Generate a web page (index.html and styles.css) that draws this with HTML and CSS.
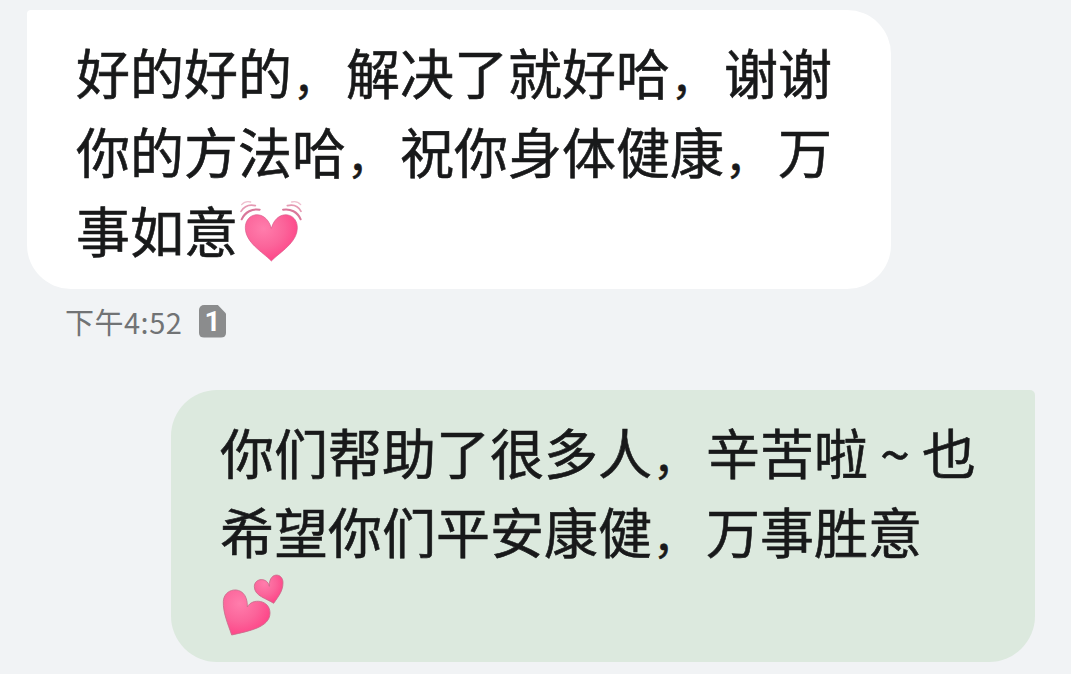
FILE: index.html
```html
<!DOCTYPE html>
<html lang="zh-CN">
<head>
<meta charset="utf-8">
<title>短信</title>
<link rel="stylesheet" href="styles.css">
</head>
<body>
<main class="chat">
  <section class="bubble received">
    <p>好的好的<span class="comma">，</span>解决了就好哈<span class="comma">，</span>谢谢</p>
    <p>你的方法哈<span class="comma">，</span>祝你身体健康<span class="comma">，</span>万</p>
    <p class="with-emoji">事如意<svg class="beating" viewBox="54 54 192 192">
      <defs><radialGradient id="pink" cx=".35" cy=".3" r=".8"><stop offset="0" stop-color="#ff7dac"/><stop offset=".5" stop-color="#fb649a"/><stop offset="1" stop-color="#ff3d83"/></radialGradient></defs>
      <path d="M154 243C128 216 76 188 76 143C76 96 138 86 154 145C170 86 232 96 232 143C232 188 180 216 154 243Z" fill="url(#pink)" stroke="#d85b8a" stroke-width="2"/>
      <g fill="none" stroke-linecap="round"><g stroke="#d9779a" stroke-width="6"><path d="M65 118C75 96 97 85 119 89"/><path d="M242 118C233 96 211 85 189 89"/></g><g stroke="#e59ab3" stroke-width="5"><path d="M63 94C74 77 90 73 106 77"/><path d="M243 94C234 77 218 73 202 77"/></g><g stroke="#efc0cf" stroke-width="4"><path d="M65 74C73 65 82 63 92 66"/><path d="M242 74C234 65 225 63 215 66"/></g></g>
    </svg></p>
  </section>
  <div class="meta"><time>下午4:52</time><span class="sim">1</span></div>
  <section class="bubble sent">
    <p>你们帮助了很多人<span class="comma">，</span>辛苦啦<span class="tilde">~</span>也</p>
    <p>希望你们平安康健<span class="comma">，</span>万事胜意</p>
    <p class="with-emoji"><svg class="hearts" viewBox="60 39 192 192" fill="url(#pink)" stroke="#c96c8b" stroke-width="2.5">
      <path d="M95 225C83 190 69 158 70 125C71 79 145 72 142 141C156 113 210 119 210 159C210 202 147 213 95 225Z"/>
      <path d="M221 130C201 116 163 108 163 80C163 53 203 51 208 79C206 35 249 37 249 68C249 94 235 109 221 130Z"/>
    </svg></p>
  </section>
</main>
</body>
</html>
```
FILE: styles.css
```css
body{margin:0;background:#f1f3f5;font-family:"Noto Sans CJK SC",sans-serif;color:#18191a}
.chat{display:flex;flex-direction:column;width:1071px;height:674px;padding:10px 36px 12px 27px;box-sizing:border-box}
.bubble{box-sizing:border-box;font-size:54px;line-height:79px;-webkit-text-stroke:.6px currentColor}
.bubble p{margin:0;height:79px;white-space:nowrap}
.received{width:864px;height:279px;padding:22px 49px;border-radius:4px 44px 44px 44px;background:#fff}
.sent{align-self:flex-end;width:864px;height:272px;margin-top:37px;padding:22px 49px;border-radius:46px 5px 46px 46px;background:#dce9de}
.with-emoji{display:flex;align-items:flex-start}
.beating,.hearts{width:64px;height:64px;-webkit-text-stroke:0}
.beating{margin-top:8px}
.hearts{margin-top:3px}
.comma{display:inline-block;width:54px;font-size:44px;line-height:1;text-indent:1px}
.tilde{display:inline-block;width:54px;text-align:center}
.meta{display:flex;align-items:center;height:64px;padding-left:38px;gap:17px;color:#717375;font-size:29px}
.meta time{width:117px;letter-spacing:.5px;white-space:nowrap}
.sim{width:27px;height:33px;border-radius:5px;background:#8b8c8d;color:#fff;font-family:Roboto,sans-serif;font-size:28px;font-weight:700;line-height:34px;text-align:center;clip-path:polygon(0 0,68% 0,100% 27%,100% 100%,0 100%)}
```
